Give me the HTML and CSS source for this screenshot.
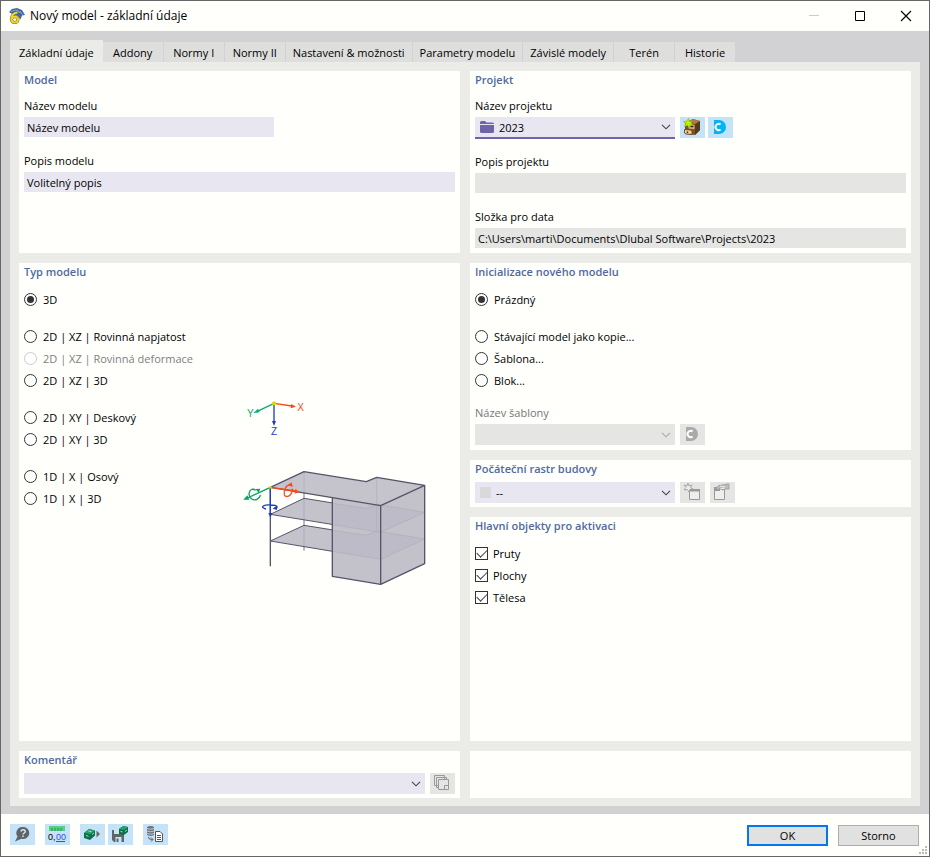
FILE: index.html
```html
<!DOCTYPE html>
<html lang="cs">
<head>
<meta charset="utf-8">
<title>Nový model - základní údaje</title>
<link rel="stylesheet" href="styles.css">
</head>
<body>
<svg class="defs" aria-hidden="true">
  <symbol id="chevron" viewBox="0 0 10 6"><path d="M1 .8l4 4 4-4" fill="none" stroke="currentColor" stroke-width="1.1"/></symbol>
  <symbol id="dlubal" viewBox="0 0 25 21"><path d="M6 3h5a7 7 0 0 1 0 14H6z" fill="currentColor"/><path d="M12.600 7.600a3.100 3.100 0 1 0 0 4.800" fill="none" stroke="#fff" stroke-width="2"/></symbol>
</svg>
<div class="window">
  <header class="titlebar">
    <svg class="app-icon" viewBox="0 0 16 16" aria-hidden="true">
      <path d="M0 4l3-3 5-1 5 2 3 5-3 .5-1.500 4L9 8 3 6z" fill="#3f66a0"/>
      <path d="M2 3.500l5-1.500 4 3M8 1.500l4 4M11 3l3 4" fill="none" stroke="#8fb0dc" stroke-width=".8"/>
      <path d="M8.500 4.500C5 5 2.500 7.500 2.500 11c0 2 1.200 3.500 3.200 3.500S9 13.200 9 11.300 7.800 8.800 6 8.800s-3 .9-3.400 2" fill="none" stroke="#7c6a12" stroke-width="3"/>
      <path d="M8.500 4.500C5 5 2.500 7.500 2.500 11c0 2 1.200 3.500 3.200 3.500S9 13.200 9 11.300 7.800 8.800 6 8.800s-3 .9-3.400 2" fill="none" stroke="#ecd52c" stroke-width="2"/>
    </svg>
    <h1>Nový model - základní údaje</h1>
    <div class="window-controls">
      <button type="button" aria-label="Minimalizovat" disabled><svg viewBox="0 0 10 10"><path d="M0 4.500h10" stroke="#ccc"/></svg></button>
      <button type="button" aria-label="Maximalizovat"><svg viewBox="0 0 10 10"><path d="M.5.5h9v9h-9z" fill="none" stroke="#000"/></svg></button>
      <button type="button" aria-label="Zavřít"><svg viewBox="0 0 10 10"><path d="M0 0l10 10M10 0L0 10" stroke="#000" stroke-width="1.100"/></svg></button>
    </div>
  </header>

  <main class="content">
    <nav class="tabs">
      <button type="button" class="tab active">Základní údaje</button>
      <button type="button" class="tab">Addony</button>
      <button type="button" class="tab">Normy I</button>
      <button type="button" class="tab">Normy II</button>
      <button type="button" class="tab">Nastavení &amp; možnosti</button>
      <button type="button" class="tab">Parametry modelu</button>
      <button type="button" class="tab">Závislé modely</button>
      <button type="button" class="tab">Terén</button>
      <button type="button" class="tab">Historie</button>
    </nav>

    <div class="page">
      <section class="panel">
        <h2>Model</h2>
        <div class="fields">
          <div class="field"><label for="name">Název modelu</label><input id="name" class="text short" type="text" value="Název modelu"></div>
          <div class="field"><label for="desc">Popis modelu</label><input id="desc" class="text" type="text" value="Volitelný popis"></div>
        </div>
      </section>

      <section class="panel">
        <h2>Projekt</h2>
        <div class="fields">
          <div class="field">
            <label for="project">Název projektu</label>
            <div class="row tight">
              <div class="combo focused">
                <select id="project"><option>2023</option></select>
                <svg class="lead" viewBox="0 0 14 12" aria-hidden="true"><path d="M0 1.500Q0 0 1.500 0H5l1.500 1.500H12.500Q14 1.500 14 3H0z" fill="#7064a8"/><path d="M0 4h14v6.500q0 1.500-1.500 1.500h-11Q0 12 0 10.500z" fill="#7064a8"/></svg>
                <svg class="arrow"><use href="#chevron"/></svg>
              </div>
              <button type="button" class="tool first" aria-label="Nový projekt"><svg viewBox="0 0 25 21"><path d="M5 6l8-4 7 2v9l-5 5-10-1z" fill="#7a5528"/><path d="M5 6l8-4 7 2-5 3z" fill="#a87e48"/><path d="M8.500 7.500l6 .5v4l-6-.5z" fill="#e0b87f"/><path d="M15 7.500l5-3.500v9l-5 5z" fill="#54391a"/><path d="M4.500 12.500l6 .5 1.500 1v3.500l-6-.5-1.500-1z" fill="#f4cc92" stroke="#4f3516" stroke-width=".8"/><path d="M10.500 9.500h3M7.500 14.500v1.500" stroke="#3a2409" stroke-width="1.300"/><path d="M8.500 1.500l1 3 3-1-1.500 2.500L13 8l-3 .2-1 2.800-1.500-2.500-3 1 1-3-2-2 3-.2z" fill="#b8f000" stroke="#7a9a10" stroke-width=".5"/></svg></button>
              <button type="button" class="tool cyan" aria-label="Dlubal Center"><svg><use href="#dlubal"/></svg></button>
            </div>
          </div>
          <div class="field"><label for="pdesc">Popis projektu</label><input id="pdesc" class="text readonly" type="text" readonly></div>
          <div class="field"><label for="folder">Složka pro data</label><input id="folder" class="text readonly" type="text" readonly value="C:\Users\marti\Documents\Dlubal Software\Projects\2023"></div>
        </div>
      </section>

      <section class="panel">
        <h2>Typ modelu</h2>
        <div class="type-body">
          <div class="choices">
            <div class="group"><label class="choice"><input type="radio" name="type" checked>3D</label></div>
            <div class="group">
              <label class="choice"><input type="radio" name="type">2D | XZ | Rovinná napjatost</label>
              <label class="choice off"><input type="radio" name="type" disabled>2D | XZ | Rovinná deformace</label>
              <label class="choice"><input type="radio" name="type">2D | XZ | 3D</label>
            </div>
            <div class="group">
              <label class="choice"><input type="radio" name="type">2D | XY | Deskový</label>
              <label class="choice"><input type="radio" name="type">2D | XY | 3D</label>
            </div>
            <div class="group">
              <label class="choice"><input type="radio" name="type">1D | X | Osový</label>
              <label class="choice"><input type="radio" name="type">1D | X | 3D</label>
            </div>
          </div>
          <svg class="drawing" viewBox="30 15 570 585" role="img" aria-label="Model budovy s osami X, Y, Z">
            <g stroke-width="4" fill="none">
              <path d="M132 40L82 64" stroke="#0aaa74"/><path d="M132 40L186 48" stroke="#ff4614"/><path d="M132 40V96" stroke="#1e3cc8"/>
            </g>
            <path d="M70 69l14-13 5 11z" fill="#0aaa74"/><path d="M198 50l-16 5 2-13z" fill="#ff4614"/><path d="M132 108l-6-15h12z" fill="#1e3cc8"/>
            <circle cx="132" cy="40" r="6" fill="#dcd800"/>
            <g class="axis"><text x="51" y="81" fill="#0aaa74">Y</text><text x="202" y="64" fill="#ff4614">X</text><text x="123" y="136" fill="#1e3cc8">Z</text></g>

            <path d="M222 245V482" stroke="#777488" stroke-width="3"/>
            <g fill="#b9b7c2" fill-opacity=".84" stroke="#57546a" stroke-width="3" stroke-linejoin="round">
              <path d="M121 453L222 406 409 436 440 423 584 447 452 508z"/>
              <path d="M121 373L222 325 409 355 440 343 584 367 452 427z"/>
            </g>
            <path d="M121 292L222 245 409 275 440 262 584 286 452 347z" fill="#c5c3cc"/>
            <path d="M307 323L452 347 584 286V521L452 583 307 559z" fill="#c3c1ca"/>
            <path d="M307 404L452 427 584 367 440 343 409 355 307 340zM307 484L452 508 584 447 440 423 409 436 307 421z" fill="#bdbbc8"/>
            <path d="M307 404L452 427 584 367M307 484L452 508 584 447M307 340L409 355 440 343 584 367M307 421L409 436 440 423 584 447M440 262V423M222 245V308" fill="none" stroke="#aeacb7" stroke-width="2"/>
            <path d="M121 292L222 245 409 275 440 262 584 286 452 347zM307 323V559L452 583 584 521V286M452 347V583M121 292V529" fill="none" stroke="#57546a" stroke-width="4" stroke-linejoin="round"/>
            <g fill="none" stroke-width="4">
              <path d="M121 292L52 324M67 297A17 17 0 1 0 91 315M67 297l10 3" stroke="#0aa067"/>
              <path d="M121 292L196 303M180 285c-12-2-19 17-17 29 5 12 24 4 24-18" stroke="#ff4614"/>
              <path d="M121 292V370M108 357c-22-6-4-14 14-12 22 0 24 9 10 10" stroke="#1e3cc8"/>
            </g>
            <path d="M40 329l12-13 6 13zM76 297l15-1-5 12z" fill="#0aa067"/><path d="M209 306l-15 5 2-14zM173 286l12-9 3 14z" fill="#ff4614"/><path d="M121 383l-6-14h12zM128 356l14-9-1 13z" fill="#1e3cc8"/>
            <circle cx="121" cy="292" r="4" fill="#dcd800"/>
          </svg>
        </div>
      </section>

      <div class="stack">
        <section class="panel">
          <h2>Inicializace nového modelu</h2>
          <div class="choices">
            <div class="group"><label class="choice"><input type="radio" name="init" checked>Prázdný</label></div>
            <div class="group">
              <label class="choice"><input type="radio" name="init">Stávající model jako kopie...</label>
              <label class="choice"><input type="radio" name="init">Šablona...</label>
              <label class="choice"><input type="radio" name="init">Blok...</label>
            </div>
          </div>
          <div class="field template">
            <label for="template">Název šablony</label>
            <div class="row">
              <div class="combo disabled"><select id="template" disabled><option></option></select><svg class="arrow"><use href="#chevron"/></svg></div>
              <button type="button" class="tool gray" aria-label="Dlubal Center" disabled><svg><use href="#dlubal"/></svg></button>
            </div>
          </div>
        </section>
        <section class="panel compact">
          <h2><label for="grid">Počáteční rastr budovy</label></h2>
          <div class="row">
            <div class="combo"><select id="grid"><option>--</option></select><span class="swatch"></span><svg class="arrow"><use href="#chevron"/></svg></div>
            <button type="button" class="tool gray" aria-label="Nový rastr" disabled><svg viewBox="0 0 25 21"><path d="M9.500 7.500h10v10h-10z" fill="#eee" stroke="#999"/><path d="M9 7h11v2.500H9z" fill="#999"/><path d="M8 1l1 3 3-1-1.500 2.500L13 7l-3 .3L9 10 7.500 7.500 4 8l2-2.500L4 3l3 1z" fill="#eee" stroke="#999" stroke-width=".8"/></svg></button>
            <button type="button" class="tool gray" aria-label="Upravit rastr" disabled><svg viewBox="0 0 25 21"><path d="M4.500 7.500h10v10h-10z" fill="#eee" stroke="#999"/><path d="M4 5h6v4H4z" fill="#999"/><path d="M6 6.500q2-4 6-3.500l4-.5V2h3v5h-3l-4 1-2-2-2 2z" fill="#bbb" stroke="#999" stroke-width=".8"/><path d="M10 4l5 1M10 7l5-1" stroke="#eee"/></svg></button>
          </div>
        </section>
        <section class="panel grow">
          <h2>Hlavní objekty pro aktivaci</h2>
          <div class="choices">
            <div class="group checks">
              <label class="choice"><input type="checkbox" checked>Pruty</label>
              <label class="choice"><input type="checkbox" checked>Plochy</label>
              <label class="choice"><input type="checkbox" checked>Tělesa</label>
            </div>
          </div>
        </section>
      </div>

      <section class="panel compact">
        <h2><label for="comment">Komentář</label></h2>
        <div class="row">
          <div class="combo wide"><select id="comment"><option></option></select><svg class="arrow"><use href="#chevron"/></svg></div>
          <button type="button" class="tool gray" aria-label="Komentáře" disabled><svg viewBox="0 0 25 21"><g fill="#e5e5e4" stroke="#999"><path d="M4.500 2.500h10v10h-10zM6.500 4.500h10v10h-10z"/><path d="M8.500 6.500h10v10h-10z"/><path d="M14.500 16v-3.500h4" fill="none"/></g></svg></button>
        </div>
      </section>
      <section class="panel"></section>
    </div>
  </main>

  <footer class="footer">
    <div class="tools">
      <button type="button" class="tool" aria-label="Nápověda"><svg viewBox="0 0 25 21"><path d="M13 3a6 6 0 1 1-1.500 11.700L5 17.500l2.500-5A6 6 0 0 1 13 3z" fill="#5f6468"/><path d="M11 7.500q.3-1.700 2.200-1.700T15.300 7.500c0 1.500-2.200 1.500-2.200 3M13 11.500v1.500" fill="none" stroke="#d4e8f5" stroke-width="1.500"/></svg></button>
      <button type="button" class="tool" aria-label="Jednotky"><svg viewBox="0 0 25 21"><path d="M4 2h16v5H4z" fill="#58cd87"/><path d="M7 4v3M10 4v3M13 4v3M16 4v3" stroke="#2d8c55"/><text class="digits" x="3" y="16">0,</text><text class="digits" x="11" y="16" fill="#3454d4">00</text><path d="M11 17.500h9" stroke="#3454d4"/></svg></button>
      <button type="button" class="tool" aria-label="Načíst výchozí"><svg viewBox="0 0 25 21"><path d="M4 9l5-4 6 1.500v5L10 16l-6-2z" fill="#0c7048"/><path d="M4 9l5-4 6 1.500L10.500 10z" fill="#29a273"/><path d="M6 11.500l2.500.8M8.500 7l3 .7M12 10.500l2-1.500" stroke="#a7dfc5"/><path d="M16.500 6.500v7l3.500-3.500z" fill="#666"/></svg></button>
      <button type="button" class="tool near" aria-label="Uložit jako výchozí"><svg viewBox="0 0 25 21"><path d="M4 6h10v2h2v10H6l-2-2z" fill="#5f6468"/><path d="M6 6h6v4H6zM7.500 13h6v5h-6z" fill="#cbe5f7"/><path d="M8.500 14.500h2V18h-2z" fill="#5f6468"/><path d="M11 5l4-3 5 1v5l-4 3-5-1z" fill="#0c7048"/><path d="M11 5l4-3 5 1-4 3z" fill="#29a273"/><path d="M12.500 7.500l2 .4M17 7.500l2-1.500" stroke="#a7dfc5"/></svg></button>
      <button type="button" class="tool" aria-label="Kopírovat data"><svg viewBox="0 0 25 21"><path d="M4 3q3.500-2 7 0v8q-3.500 2-7 0z" fill="#707376"/><path d="M4 4.500q3.500 1.600 7 0M4 7q3.500 1.600 7 0M4 9.500q3.500 1.600 7 0" fill="none" stroke="#cbe5f7" stroke-width=".8"/><path d="M5.500 13q0 2.500 3 2.500h1M8 13.500l2 2-2 2" fill="none" stroke="#555"/><path d="M12.500 7.500h4.500l2.500 2.500v7.500h-7z" fill="#fff" stroke="#555"/><path d="M14 11.500h4M14 13.500h4M14 15.500h4" stroke="#555"/></svg></button>
    </div>
    <div class="actions">
      <button type="button" class="push default">OK</button>
      <button type="button" class="push">Storno</button>
    </div>
    <svg class="grip" viewBox="0 0 8 8" aria-hidden="true"><path d="M6 0h2v2H6zM3 3h2v2H3zM6 3h2v2H6zM0 6h2v2H0zM3 6h2v2H3zM6 6h2v2H6z" fill="#bbb"/></svg>
  </footer>
</div>
</body>
</html>
```
FILE: styles.css
```css
* { box-sizing: border-box; }

body {
  margin: 0;
  background: #fffffb;
  color: #000;
  font: 11px/18px "Open Sans", "Noto Sans", sans-serif;
}

button, input, select { font: inherit; color: inherit; }
button { border: 0; padding: 0; }
h1, h2 { margin: 0; }
.defs { display: none; }

.window {
  display: flex;
  flex-direction: column;
  min-height: 100vh;
  border: 1px solid #666;
  background: #fffffc;
}

/* Title bar */
.titlebar {
  display: flex;
  align-items: center;
  height: 30px;
  padding-left: 8px;
}
.app-icon { width: 16px; height: 16px; margin-right: 5px; overflow: visible; }
.titlebar h1 { flex: 1; font-size: 12px; font-weight: 400; }
.window-controls { display: flex; }
.window-controls button {
  display: grid;
  place-items: center;
  width: 46px;
  height: 28px;
  background: none;
}
.window-controls svg { width: 10px; height: 10px; overflow: visible; }

/* Tabs */
.content {
  flex: 1;
  display: flex;
  flex-direction: column;
  padding: 9px 9px 8px;
  background: #d2d2d4;
}
.tabs { display: flex; align-items: flex-end; }
.tab {
  min-width: 61px;
  height: 20px;
  padding: 2px 7px 0;
  background: #dededd;
  border-right: 1px solid #d2d2d4;
  white-space: nowrap;
}
.tab.active {
  height: 22px;
  padding: 4px 9px 0;
  background: #ebece8;
  border: 0;
}
.page {
  flex: 1;
  display: grid;
  grid-template-columns: 1fr 1fr;
  grid-template-rows: auto 1fr auto;
  gap: 10px;
  padding: 9px 9px 8px;
  background: #ebece8;
}

/* Panels */
.panel { padding: 0 5px 5px; background: #fffffc; min-width: 0; }
.panel.compact { padding-bottom: 4px; }
.panel h2 { font-size: 11px; line-height: 18px; font-weight: 600; color: #4f6a9c; }
.compact .row { margin-top: 4px; }
.stack { display: flex; flex-direction: column; gap: 10px; min-width: 0; }
.grow { flex: 1; }

/* Fields */
.fields { display: flex; flex-direction: column; gap: 15px; padding-top: 8px; }
.field { display: flex; flex-direction: column; gap: 2px; }
.text {
  width: 100%;
  height: 20px;
  padding: 1px 3px 0;
  border: 0;
  border-radius: 0;
  background: #e8e6f1;
}
.text.short { max-width: 250px; }
.text.readonly { background: #e5e5e4; }
.row { display: flex; align-items: flex-start; gap: 5px; }
.row.tight { gap: 3px; }
.tight .first { margin-left: 2px; }
.combo {
  display: grid;
  grid-template-columns: 1fr;
  align-items: center;
  width: 200px;
  height: 21px;
  background: #e8e6f1;
}
.combo > * { grid-area: 1 / 1; }
.combo.wide { flex: 1; }
.combo.focused { height: 20px; box-shadow: 0 2px #7064a8; }
.combo.disabled { background: #e5e5e4; }
.combo select {
  appearance: none;
  width: 100%;
  height: 100%;
  padding: 1px 20px 0 24px;
  border: 0;
  background: none;
}
.lead, .swatch, .arrow { pointer-events: none; }
.lead { width: 14px; height: 12px; margin-left: 5px; }
.swatch { width: 11px; height: 11px; margin-left: 5px; background: #d9d9d9; }
.arrow { justify-self: end; width: 10px; height: 6px; margin-right: 4px; color: #444; }
.disabled .arrow { color: #aaa; }
#grid { padding-left: 21px; }

.tool { flex: none; width: 25px; height: 21px; background: #c5e3f8; }
.tool svg { display: block; width: 25px; height: 21px; }
.tool.cyan { color: #00b5f5; }
.tool.gray { background: #e5e5e4; color: #aaa; }

/* Choices */
.choices { display: flex; flex-direction: column; gap: 15px; padding-top: 8px; }
.group { display: flex; flex-direction: column; align-items: flex-start; }
.choice { display: flex; align-items: center; gap: 6px; height: 22px; white-space: nowrap; }
.checks .choice { gap: 5px; }
.choice.off { color: #808080; }
.choice input {
  appearance: none;
  display: grid;
  place-items: center;
  width: 13px;
  height: 13px;
  margin: 0 0 1px;
  border: 1px solid #333;
  background: #fff;
}
.choice input[type="radio"] { border-radius: 50%; }
.choice input[type="radio"]:checked::before {
  content: "";
  width: 7px;
  height: 7px;
  border-radius: 50%;
  background: #333;
}
.choice input[type="checkbox"]:checked::before {
  content: "";
  width: 9px;
  height: 5px;
  margin-bottom: 3px;
  border: solid #444;
  border-width: 0 0 1px 1px;
  transform: rotate(-45deg);
}
.choice input:disabled { border-color: #ccc; }
.template { margin-top: 12px; color: #777; }

.type-body { display: flex; justify-content: space-between; }
.drawing { flex: none; width: 190px; height: 195px; margin: 114px 25px 0 0; }
.axis { font: 30px "Liberation Sans", sans-serif; }

/* Footer */
.footer {
  position: relative;
  display: flex;
  justify-content: space-between;
  height: 42px;
  padding: 10px 10px 0 9px;
}
.tools { display: flex; gap: 10px; }
.tools .near { margin-left: -7px; }
.digits { font: 400 9px "Liberation Sans", sans-serif; }
.actions { display: flex; gap: 10px; padding-top: 1px; }
.push {
  width: 81px;
  height: 21px;
  border: 1px solid #adadad;
  background: #e1e1e1;
}
.push.default { border: 2px solid #0078f0; }
.grip { position: absolute; right: 2px; bottom: 2px; width: 8px; height: 8px; }
```
